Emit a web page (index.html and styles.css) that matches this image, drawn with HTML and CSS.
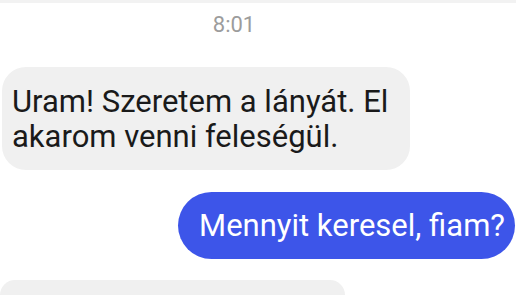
FILE: index.html
```html
<!DOCTYPE html>
<html lang="hu">

<head>
    <meta charset="UTF-8">
    <meta name="viewport" content="width=device-width, initial-scale=1.0">
    <title>Üzenetek</title>
    <link rel="stylesheet" href="styles.css">
</head>

<body>
    <div class="top-strip"></div>
    <div class="chat">
        <div class="time">8:01</div>
        <div class="bubble incoming">Uram! Szeretem a lányát. El<br>akarom venni feleségül.</div>
        <div class="bubble outgoing">Mennyit keresel, fiam?</div>
        <div class="bubble incoming last"></div>
    </div>
</body>

</html>
```

FILE: styles.css
```css
body {
    margin: 0;
    background: #fff;
    font-family: Roboto, "Liberation Sans", sans-serif;
    overflow: hidden;
    height: 295px;
}

.top-strip {
    height: 3px;
    background: #f2f2f2;
}

.chat {
    display: flex;
    flex-direction: column;
}

.time {
    margin-top: 9px;
    padding-right: 48px;
    text-align: center;
    font-size: 22px;
    line-height: 26px;
    color: #9c9c9c;
}

.bubble {
    line-height: 35px;
}

.incoming {
    align-self: flex-start;
    margin-top: 29px;
    margin-left: 2px;
    width: 408px;
    box-sizing: border-box;
    padding: 17px 10px 16px 10px;
    background: #f0f0f0;
    color: #1a1a1a;
    font-size: 31px;
    border-radius: 24px;
}

.outgoing {
    align-self: flex-end;
    margin-top: 22px;
    margin-right: 1px;
    padding: 16px 10px 16px 21px;
    background: #3d55e9;
    color: #fff;
    font-size: 31px;
    border-radius: 34px;
}

.last {
    margin-top: 21px;
    margin-left: 0;
    width: 345px;
    height: 15px;
    padding: 0;
    border-radius: 24px 24px 0 0;
}
```
